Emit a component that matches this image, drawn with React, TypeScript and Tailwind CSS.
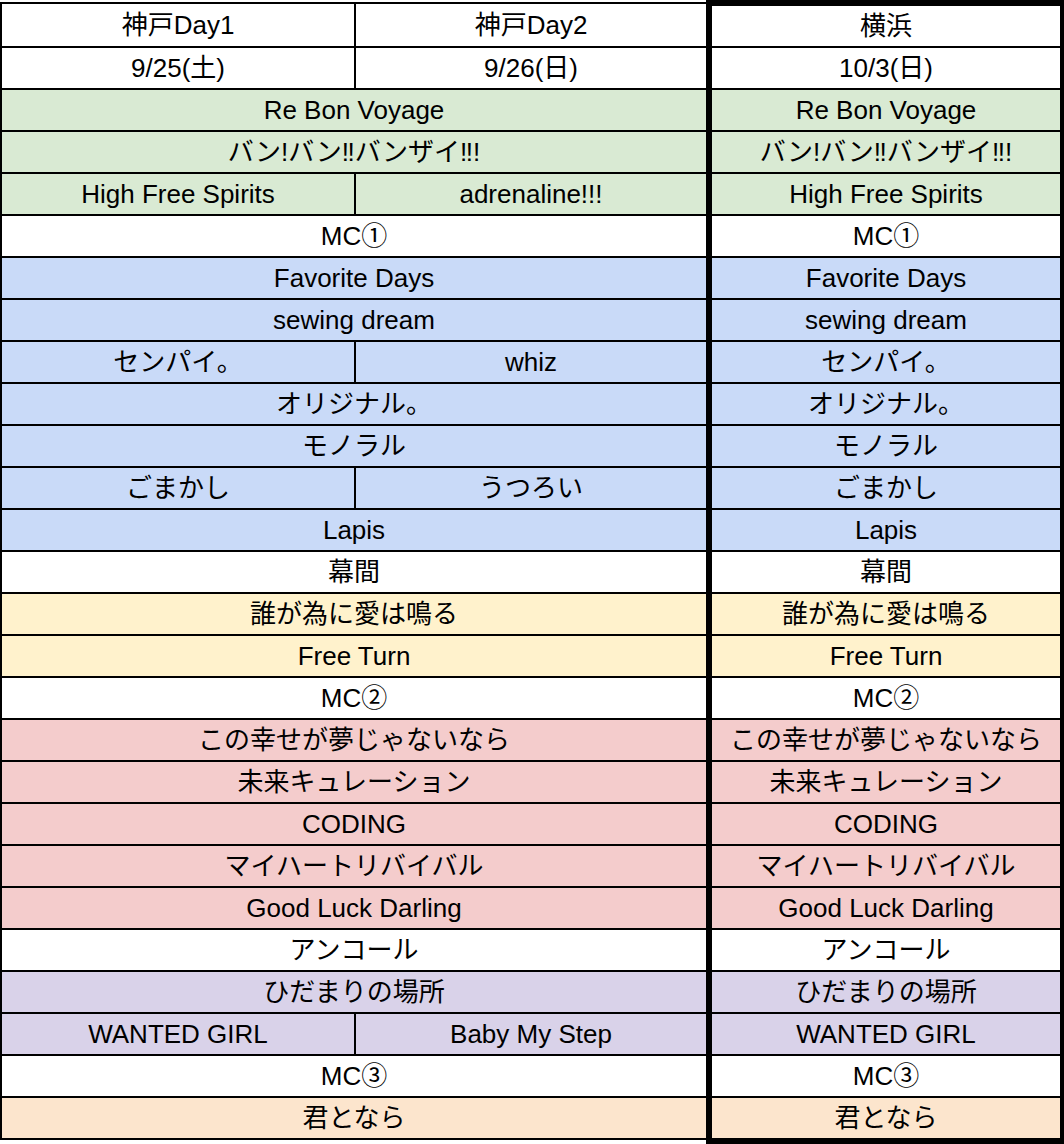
import React from "react";

type Row = {
    left: string | [string, string]; // string = merged across both Kobe days
    right: string;
    bg: string;
};

const GREEN = "bg-[#d9ead3]";
const BLUE = "bg-[#c9daf8]";
const YELLOW = "bg-[#fff2cc]";
const RED = "bg-[#f4cccc]";
const PURPLE = "bg-[#d9d2e9]";
const ORANGE = "bg-[#fce5cd]";
const WHITE = "bg-white";

const rows: Row[] = [
    { left: ["神戸Day1", "神戸Day2"], right: "横浜", bg: WHITE },
    { left: ["9/25(土)", "9/26(日)"], right: "10/3(日)", bg: WHITE },
    { left: "Re Bon Voyage", right: "Re Bon Voyage", bg: GREEN },
    { left: "バン!バン‼バンザイ‼!", right: "バン!バン‼バンザイ‼!", bg: GREEN },
    { left: ["High Free Spirits", "adrenaline!!!"], right: "High Free Spirits", bg: GREEN },
    { left: "MC①", right: "MC①", bg: WHITE },
    { left: "Favorite Days", right: "Favorite Days", bg: BLUE },
    { left: "sewing dream", right: "sewing dream", bg: BLUE },
    { left: ["センパイ。", "whiz"], right: "センパイ。", bg: BLUE },
    { left: "オリジナル。", right: "オリジナル。", bg: BLUE },
    { left: "モノラル", right: "モノラル", bg: BLUE },
    { left: ["ごまかし", "うつろい"], right: "ごまかし", bg: BLUE },
    { left: "Lapis", right: "Lapis", bg: BLUE },
    { left: "幕間", right: "幕間", bg: WHITE },
    { left: "誰が為に愛は鳴る", right: "誰が為に愛は鳴る", bg: YELLOW },
    { left: "Free Turn", right: "Free Turn", bg: YELLOW },
    { left: "MC②", right: "MC②", bg: WHITE },
    { left: "この幸せが夢じゃないなら", right: "この幸せが夢じゃないなら", bg: RED },
    { left: "未来キュレーション", right: "未来キュレーション", bg: RED },
    { left: "CODING", right: "CODING", bg: RED },
    { left: "マイハートリバイバル", right: "マイハートリバイバル", bg: RED },
    { left: "Good Luck Darling", right: "Good Luck Darling", bg: RED },
    { left: "アンコール", right: "アンコール", bg: WHITE },
    { left: "ひだまりの場所", right: "ひだまりの場所", bg: PURPLE },
    { left: ["WANTED GIRL", "Baby My Step"], right: "WANTED GIRL", bg: PURPLE },
    { left: "MC③", right: "MC③", bg: WHITE },
    { left: "君となら", right: "君となら", bg: ORANGE },
];

const Cell = ({ children, className = "" }: { children: React.ReactNode; className?: string }) => (
    <div className={`flex items-center justify-center whitespace-nowrap ${className}`}>{children}</div>
);

export default function App() {
    return (
        <div
            className="flex w-[1064px] h-[1144px] bg-white text-black text-[26px] leading-none overflow-hidden"
            style={{ fontFamily: '"Liberation Sans", Arial, "Noto Sans CJK JP", sans-serif' }}
        >
            {/* Kobe days */}
            <div className="w-[706px] mt-[2px] flex flex-col border-l-2 border-t-2 border-black self-start">
                {rows.map((row, i) => (
                    <div
                        key={i}
                        className={`flex border-b-2 border-black ${row.bg} ${i === 0 ? "h-[44px]" : "h-[42px]"}`}
                    >
                        {typeof row.left === "string" ? (
                            <Cell className="flex-1">{row.left}</Cell>
                        ) : (
                            <>
                                <Cell className="w-[354px] border-r-2 border-black">{row.left[0]}</Cell>
                                <Cell className="flex-1">{row.left[1]}</Cell>
                            </>
                        )}
                    </div>
                ))}
            </div>

            {/* Yokohama, boxed */}
            <div className="w-[358px] h-[1144px] flex flex-col border-t-[6px] border-b-[6px] border-l-[6px] border-r-4 border-black">
                {rows.map((row, i) => (
                    <Cell
                        key={i}
                        className={`${row.bg} ${
                            i === rows.length - 1 ? "h-[40px]" : "h-[42px] border-b-2 border-black"
                        }`}
                    >
                        {row.right}
                    </Cell>
                ))}
            </div>
        </div>
    );
}
